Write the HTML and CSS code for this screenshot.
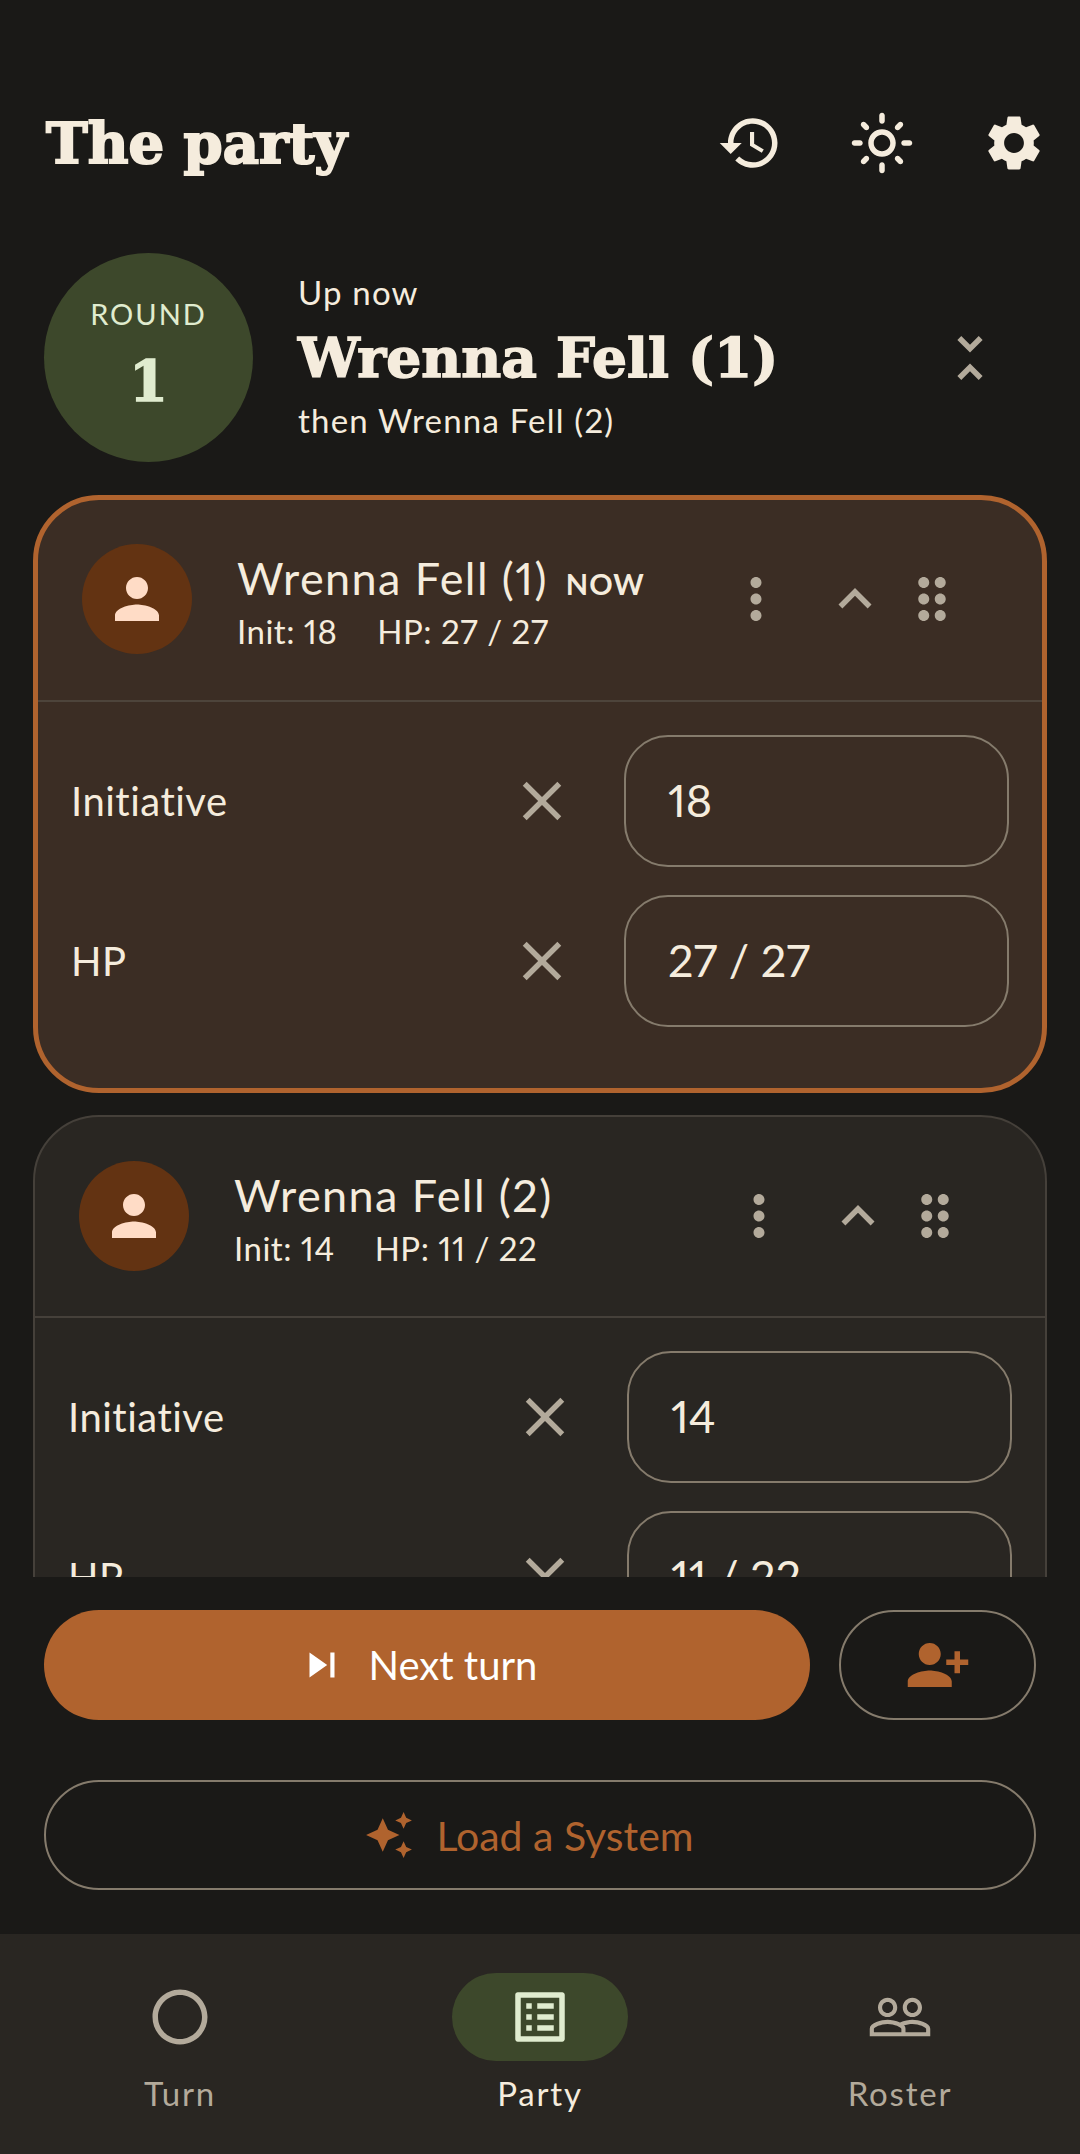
FILE: index.html
```html
<!DOCTYPE html>
<html lang="en">
<head>
    <meta charset="UTF-8">
    <meta name="viewport" content="width=device-width, initial-scale=1.0">
    <title>The party</title>
    <link rel="stylesheet" href="styles.css">
</head>
<body>
<div class="app">

    <header class="topbar">
        <h1 class="title">The party</h1>
        <div class="topbar-actions">
            <span class="icon-box"><svg class="icon" viewBox="0 0 24 24"><path d="M13 3c-4.97 0-9 4.03-9 9H1l3.89 3.89.07.14L9 12H6c0-3.87 3.13-7 7-7s7 3.13 7 7-3.13 7-7 7c-1.93 0-3.68-.79-4.94-2.06l-1.42 1.42C8.27 19.99 10.51 21 13 21c4.97 0 9-4.03 9-9s-4.03-9-9-9zm-1 5v5l4.28 2.54.72-1.21-3.5-2.08V8H12z"/></svg></span>
            <span class="icon-box"><svg class="icon" viewBox="0 0 24 24"><path d="M12 9c1.65 0 3 1.35 3 3s-1.35 3-3 3-3-1.35-3-3 1.35-3 3-3m0-2c-2.76 0-5 2.24-5 5s2.24 5 5 5 5-2.24 5-5-2.24-5-5-5zM2 13h2c.55 0 1-.45 1-1s-.45-1-1-1H2c-.55 0-1 .45-1 1s.45 1 1 1zm18 0h2c.55 0 1-.45 1-1s-.45-1-1-1h-2c-.55 0-1 .45-1 1s.45 1 1 1zM11 2v2c0 .55.45 1 1 1s1-.45 1-1V2c0-.55-.45-1-1-1s-1 .45-1 1zm0 18v2c0 .55.45 1 1 1s1-.45 1-1v-2c0-.55-.45-1-1-1s-1 .45-1 1zM5.99 4.58c-.39-.39-1.03-.39-1.41 0-.39.39-.39 1.03 0 1.41l1.06 1.06c.39.39 1.03.39 1.41 0s.39-1.03 0-1.41L5.99 4.58zm12.37 12.37c-.39-.39-1.03-.39-1.41 0-.39.39-.39 1.03 0 1.41l1.06 1.06c.39.39 1.03.39 1.41 0 .39-.39.39-1.03 0-1.41l-1.06-1.06zm1.06-10.96c.39-.39.39-1.03 0-1.41-.39-.39-1.03-.39-1.41 0l-1.06 1.06c-.39.39-.39 1.03 0 1.41s1.03.39 1.41 0l1.06-1.06zM7.05 18.36c.39-.39.39-1.03 0-1.41-.39-.39-1.03-.39-1.41 0l-1.06 1.06c-.39.39-.39 1.03 0 1.41s1.03.39 1.41 0l1.06-1.06z"/></svg></span>
            <span class="icon-box"><svg class="icon" viewBox="0 0 24 24"><path d="M19.14 12.94c.04-.3.06-.61.06-.94 0-.32-.02-.64-.07-.94l2.03-1.58c.18-.14.23-.41.12-.61l-1.92-3.32c-.12-.22-.37-.29-.59-.22l-2.39.96c-.5-.38-1.03-.7-1.62-.94l-.36-2.54c-.04-.24-.24-.41-.48-.41h-3.84c-.24 0-.43.17-.47.41l-.36 2.54c-.59.24-1.13.57-1.62.94l-2.39-.96c-.22-.08-.47 0-.59.22L2.74 8.87c-.12.21-.08.47.12.61l2.03 1.58c-.05.3-.09.63-.09.94s.02.64.07.94l-2.03 1.58c-.18.14-.23.41-.12.61l1.92 3.32c.12.22.37.29.59.22l2.39-.96c.5.38 1.03.7 1.62.94l.36 2.54c.05.24.24.41.48.41h3.84c.24 0 .44-.17.47-.41l.36-2.54c.59-.24 1.13-.56 1.62-.94l2.39.96c.22.08.47 0 .59-.22l1.92-3.32c.12-.22.07-.47-.12-.61l-2.01-1.58zM12 15.6c-1.98 0-3.6-1.62-3.6-3.6s1.62-3.6 3.6-3.6 3.6 1.62 3.6 3.6-1.62 3.6-3.6 3.6z"/></svg></span>
        </div>
    </header>

    <section class="hero">
        <div class="round">
            <span class="round-label">ROUND</span>
            <span class="round-num">1</span>
        </div>
        <div class="hero-text">
            <div class="hero-small">Up now</div>
            <div class="hero-name">Wrenna Fell (1)</div>
            <div class="hero-small">then Wrenna Fell (2)</div>
        </div>
        <span class="icon-box muted"><svg class="icon" viewBox="0 0 24 24"><path d="M7.41 18.59L8.83 20 12 16.83 15.17 20l1.41-1.41L12 14l-4.59 4.59zm9.18-13.18L15.17 4 12 7.17 8.83 4 7.41 5.41 12 10l4.59-4.59z"/></svg></span>
    </section>

    <main class="list">
        <article class="card card-active">
            <div class="card-head">
                <div class="avatar"><svg class="icon" viewBox="0 0 24 24"><path d="M12 12c2.21 0 4-1.79 4-4s-1.79-4-4-4-4 1.79-4 4 1.79 4 4 4zm0 2c-2.67 0-8 1.34-8 4v2h16v-2c0-2.66-5.33-4-8-4z"/></svg></div>
                <div class="card-info">
                    <div class="card-name">Wrenna Fell (1) <span class="now">NOW</span></div>
                    <div class="card-sub"><span>Init: 18</span><span>HP: 27 / 27</span></div>
                </div>
                <span class="icon-box muted"><svg class="icon" viewBox="0 0 24 24"><path d="M12 8c1.1 0 2-.9 2-2s-.9-2-2-2-2 .9-2 2 .9 2 2 2zm0 2c-1.1 0-2 .9-2 2s.9 2 2 2 2-.9 2-2-.9-2-2-2zm0 6c-1.1 0-2 .9-2 2s.9 2 2 2 2-.9 2-2-.9-2-2-2z"/></svg></span>
                <svg class="icon muted" viewBox="0 0 24 24"><path d="M12 8l-6 6 1.41 1.41L12 10.83l4.59 4.58L18 14z"/></svg>
                <svg class="icon muted drag" viewBox="0 0 24 24"><path d="M11 18c0 1.1-.9 2-2 2s-2-.9-2-2 .9-2 2-2 2 .9 2 2zm-2-8c-1.1 0-2 .9-2 2s.9 2 2 2 2-.9 2-2-.9-2-2-2zm0-6c-1.1 0-2 .9-2 2s.9 2 2 2 2-.9 2-2-.9-2-2-2zm6 4c1.1 0 2-.9 2-2s-.9-2-2-2-2 .9-2 2 .9 2 2 2zm0 2c-1.1 0-2 .9-2 2s.9 2 2 2 2-.9 2-2-.9-2-2-2zm0 6c-1.1 0-2 .9-2 2s.9 2 2 2 2-.9 2-2-.9-2-2-2z"/></svg>
            </div>
            <div class="card-body">
                <div class="field">
                    <span class="field-label">Initiative</span>
                    <span class="icon-box muted"><svg class="icon" viewBox="0 0 24 24"><path d="M19 6.41L17.59 5 12 10.59 6.41 5 5 6.41 10.59 12 5 17.59 6.41 19 12 13.41 17.59 19 19 17.59 13.41 12z"/></svg></span>
                    <div class="field-input">18</div>
                </div>
                <div class="field">
                    <span class="field-label">HP</span>
                    <span class="icon-box muted"><svg class="icon" viewBox="0 0 24 24"><path d="M19 6.41L17.59 5 12 10.59 6.41 5 5 6.41 10.59 12 5 17.59 6.41 19 12 13.41 17.59 19 19 17.59 13.41 12z"/></svg></span>
                    <div class="field-input">27 / 27</div>
                </div>
            </div>
        </article>

        <article class="card">
            <div class="card-head">
                <div class="avatar"><svg class="icon" viewBox="0 0 24 24"><path d="M12 12c2.21 0 4-1.79 4-4s-1.79-4-4-4-4 1.79-4 4 1.79 4 4 4zm0 2c-2.67 0-8 1.34-8 4v2h16v-2c0-2.66-5.33-4-8-4z"/></svg></div>
                <div class="card-info">
                    <div class="card-name">Wrenna Fell (2)</div>
                    <div class="card-sub"><span>Init: 14</span><span>HP: 11 / 22</span></div>
                </div>
                <span class="icon-box muted"><svg class="icon" viewBox="0 0 24 24"><path d="M12 8c1.1 0 2-.9 2-2s-.9-2-2-2-2 .9-2 2 .9 2 2 2zm0 2c-1.1 0-2 .9-2 2s.9 2 2 2 2-.9 2-2-.9-2-2-2zm0 6c-1.1 0-2 .9-2 2s.9 2 2 2 2-.9 2-2-.9-2-2-2z"/></svg></span>
                <svg class="icon muted" viewBox="0 0 24 24"><path d="M12 8l-6 6 1.41 1.41L12 10.83l4.59 4.58L18 14z"/></svg>
                <svg class="icon muted drag" viewBox="0 0 24 24"><path d="M11 18c0 1.1-.9 2-2 2s-2-.9-2-2 .9-2 2-2 2 .9 2 2zm-2-8c-1.1 0-2 .9-2 2s.9 2 2 2 2-.9 2-2-.9-2-2-2zm0-6c-1.1 0-2 .9-2 2s.9 2 2 2 2-.9 2-2-.9-2-2-2zm6 4c1.1 0 2-.9 2-2s-.9-2-2-2-2 .9-2 2 .9 2 2 2zm0 2c-1.1 0-2 .9-2 2s.9 2 2 2 2-.9 2-2-.9-2-2-2zm0 6c-1.1 0-2 .9-2 2s.9 2 2 2 2-.9 2-2-.9-2-2-2z"/></svg>
            </div>
            <div class="card-body">
                <div class="field">
                    <span class="field-label">Initiative</span>
                    <span class="icon-box muted"><svg class="icon" viewBox="0 0 24 24"><path d="M19 6.41L17.59 5 12 10.59 6.41 5 5 6.41 10.59 12 5 17.59 6.41 19 12 13.41 17.59 19 19 17.59 13.41 12z"/></svg></span>
                    <div class="field-input">14</div>
                </div>
                <div class="field">
                    <span class="field-label">HP</span>
                    <span class="icon-box muted"><svg class="icon" viewBox="0 0 24 24"><path d="M19 6.41L17.59 5 12 10.59 6.41 5 5 6.41 10.59 12 5 17.59 6.41 19 12 13.41 17.59 19 19 17.59 13.41 12z"/></svg></span>
                    <div class="field-input">11 / 22</div>
                </div>
            </div>
        </article>
    </main>

    <section class="actions">
        <div class="action-row">
            <div class="btn btn-next">
                <svg class="icon-sm" viewBox="0 0 24 24"><path d="M6 18l8.5-6L6 6v12zM16 6v12h2V6h-2z"/></svg>
                <span>Next turn</span>
            </div>
            <div class="btn btn-add">
                <svg class="icon" viewBox="0 0 24 24"><path transform="translate(24 0) scale(-1 1)" d="M15 12c2.21 0 4-1.79 4-4s-1.79-4-4-4-4 1.79-4 4 1.79 4 4 4zm-9-2V7H4v3H1v2h3v3h2v-3h3v-2H6zm9 4c-2.67 0-8 1.34-8 4v2h16v-2c0-2.66-5.33-4-8-4z"/></svg>
            </div>
        </div>
        <div class="btn btn-load">
            <svg class="icon-sm" viewBox="0 0 24 24"><path d="M19 9l1.25-2.75L23 5l-2.75-1.25L19 1l-1.25 2.75L15 5l2.75 1.25L19 9zm-7.5.5L9 4 6.5 9.5 1 12l5.5 2.5L9 20l2.5-5.5L17 12l-5.5-2.5zM19 15l-1.25 2.75L15 19l2.75 1.25L19 23l1.25-2.75L23 19l-2.75-1.25L19 15z"/></svg>
            <span>Load a System</span>
        </div>
    </section>

    <nav class="nav">
        <div class="nav-item">
            <span class="nav-pill"><svg class="icon" viewBox="0 0 24 24"><path d="M12 2C6.47 2 2 6.47 2 12s4.47 10 10 10 10-4.47 10-10S17.53 2 12 2zm0 18c-4.41 0-8-3.59-8-8s3.59-8 8-8 8 3.59 8 8-3.59 8-8 8z"/></svg></span>
            <span class="nav-label">Turn</span>
        </div>
        <div class="nav-item nav-current">
            <span class="nav-pill"><svg class="icon" viewBox="0 0 24 24"><path d="M19 5v14H5V5h14m1.1-2H3.9c-.5 0-.9.4-.9.9v16.2c0 .4.4.9.9.9h16.2c.4 0 .9-.5.9-.9V3.9c0-.5-.5-.9-.9-.9zM11 7h6v2h-6V7zm0 4h6v2h-6v-2zm0 4h6v2h-6zM7 7h2v2H7zm0 4h2v2H7zm0 4h2v2H7z"/></svg></span>
            <span class="nav-label">Party</span>
        </div>
        <div class="nav-item">
            <span class="nav-pill"><svg class="icon" viewBox="0 0 24 24"><path fill-rule="evenodd" d="M16.5 13c-1.2 0-3.07.34-4.5 1-1.43-.67-3.3-1-4.5-1C5.33 13 1 14.08 1 16.25V19h22v-2.75c0-2.17-4.33-3.25-6.5-3.25zm-4 4.5h-10v-1.25c0-.54 2.56-1.75 5-1.75s5 1.21 5 1.75v1.25zm9 0H14v-1.25c0-.46-.2-.86-.52-1.22.88-.3 1.96-.53 3.02-.53 2.44 0 5 1.21 5 1.75v1.25zM7.5 12c1.93 0 3.5-1.57 3.5-3.5S9.43 5 7.5 5 4 6.57 4 8.5 5.57 12 7.5 12zm0-5.5c1.1 0 2 .9 2 2s-.9 2-2 2-2-.9-2-2 .9-2 2-2zm9 5.5c1.93 0 3.5-1.57 3.5-3.5S18.43 5 16.5 5 13 6.57 13 8.5s1.57 3.5 3.5 3.5zm0-5.5c1.1 0 2 .9 2 2s-.9 2-2 2-2-.9-2-2 .9-2 2-2z"/></svg></span>
            <span class="nav-label">Roster</span>
        </div>
    </nav>

</div>
</body>
</html>
```

FILE: styles.css
```css
body {
    margin: 0;
    background: #1a1917;
    color: #f5ecdd;
    font-family: "Lato", "Noto Sans", sans-serif;
    font-variant-numeric: proportional-nums;
}
.app {
    height: 2154px;
    display: flex;
    flex-direction: column;
    overflow: hidden;
}
.icon {
    width: 66px;
    height: 66px;
    fill: currentColor;
    flex: none;
    display: block;
}
.icon-sm {
    width: 50px;
    height: 50px;
    fill: currentColor;
    flex: none;
}
.icon-box {
    width: 132px;
    height: 132px;
    display: flex;
    align-items: center;
    justify-content: center;
    flex: none;
}
.muted { color: #b3aa9b; }

/* top bar */
.topbar {
    display: flex;
    align-items: center;
    justify-content: space-between;
    padding: 77px 0 0 46px;
}
.title {
    margin: 0;
    font-family: "DejaVu Serif", serif;
    font-weight: 700;
    font-size: 56px;
    -webkit-text-stroke: 2px #f5ecdd;
}
.topbar-actions { display: flex; }

/* up now */
.hero {
    display: flex;
    align-items: center;
    padding: 44px 44px 33px;
}
.round {
    width: 209px;
    height: 209px;
    box-sizing: border-box;
    padding-bottom: 6px;
    border-radius: 50%;
    background: #3d482b;
    color: #e0eccf;
    display: flex;
    flex-direction: column;
    align-items: center;
    justify-content: center;
    flex: none;
}
.round-label {
    font-size: 29px;
    letter-spacing: 2px;
    line-height: 40px;
    margin-bottom: 12px;
}
.round-num {
    font-family: "DejaVu Serif", serif;
    font-weight: 700;
    font-size: 56px;
    line-height: 70px;
    -webkit-text-stroke: 1.5px #e0eccf;
}
.hero-text {
    flex: 1;
    margin-left: 45px;
    padding-bottom: 3px;
}
.hero-small {
    font-size: 33px;
    letter-spacing: 1.2px;
    line-height: 44px;
}
.hero-small:first-child { margin-bottom: 4px; }
.hero-name {
    font-family: "DejaVu Serif", serif;
    font-weight: 700;
    font-size: 55px;
    line-height: 80px;
    -webkit-text-stroke: 1.5px #f5ecdd;
}

/* combatant cards */
.list {
    flex: 1;
    min-height: 0;
    overflow: hidden;
    padding: 0 33px;
}
.card {
    background: #292622;
    border: 2.75px solid #45403a;
    border-radius: 66px;
    margin-bottom: 22px;
}
.card-active {
    background: #3b2d24;
    border: 5.5px solid #b0632e;
}
.card-head {
    display: flex;
    align-items: center;
    padding: 44px 77px 45.5px 44px;
    border-bottom: 2.75px solid #4d443b;
}
.card:not(.card-active) .card-head { border-bottom-color: #45403a; }
.card-head .icon-box { height: 66px; }
.avatar {
    width: 110px;
    height: 110px;
    border-radius: 50%;
    background: #633312;
    color: #ffdcc6;
    display: flex;
    align-items: center;
    justify-content: center;
    flex: none;
}
.card-info {
    flex: 1;
    margin-left: 45px;
    padding-top: 2px;
}
.card-name {
    font-size: 45px;
    letter-spacing: 1.4px;
    line-height: 62px;
}
.now {
    font-size: 29px;
    font-weight: 700;
    letter-spacing: 1px;
    line-height: 1;
    margin-left: 5px;
}
.card-sub {
    display: flex;
    gap: 40px;
    font-size: 33px;
    line-height: 44px;
    letter-spacing: 0.5px;
}
.drag { margin-left: 11px; }
.card-body {
    padding: 33px 33px 61px;
    display: flex;
    flex-direction: column;
    gap: 28px;
}
.field {
    display: flex;
    align-items: center;
}
.field-label {
    flex: 1;
    font-size: 40px;
    letter-spacing: 0.5px;
}
.field-input {
    width: 385px;
    height: 132px;
    box-sizing: border-box;
    margin-left: 16px;
    padding-left: 42px;
    border: 2.75px solid #857b6c;
    border-radius: 44px;
    font-size: 45px;
    line-height: 126px;
}

/* bottom buttons */
.actions {
    padding: 33px 44px 44px;
    display: flex;
    flex-direction: column;
    gap: 60px;
}
.action-row {
    display: flex;
    gap: 29px;
}
.btn {
    height: 110px;
    box-sizing: border-box;
    border-radius: 55px;
    display: flex;
    align-items: center;
    justify-content: center;
    font-size: 41px;
}
.btn-next {
    flex: 1;
    gap: 22px;
    padding-right: 20px;
    font-size: 40px;
    background: #b0632e;
    color: #fff;
}
.btn-add {
    width: 197px;
    border: 2.75px solid #857b6c;
    color: #b0632e;
}
.btn-load {
    gap: 22px;
    padding-right: 22px;
    border: 2.75px solid #857b6c;
    color: #b0632e;
}

/* bottom nav */
.nav {
    height: 220px;
    background: #292622;
    display: flex;
    padding-top: 39px;
    box-sizing: border-box;
}
.nav-item {
    flex: 1;
    display: flex;
    flex-direction: column;
    align-items: center;
    color: #b3aa9b;
}
.nav-pill {
    width: 176px;
    height: 88px;
    border-radius: 44px;
    display: flex;
    align-items: center;
    justify-content: center;
}
.nav-label {
    font-size: 33px;
    letter-spacing: 1.8px;
    margin-top: 12px;
}
.nav-current { color: #f5ecdd; }
.nav-current .nav-pill {
    background: #3d482b;
    color: #e0eccf;
}
```
